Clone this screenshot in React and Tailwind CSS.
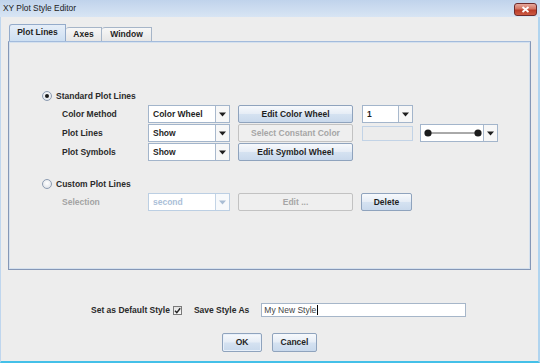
function Arrow({ disabled }) {
  return (
    <div className={`w-[14px] h-full flex items-center justify-center border-l ${disabled ? "border-l-[#c3d4e6] bg-[#f7f9fb]" : "border-l-[#a9b9cd] bg-[#f7f7f7]"}`}>
      <svg width="7" height="5" viewBox="0 0 7 5">
        <path d="M0 0.5H7L3.5 4.5Z" fill={disabled ? "#a9bdd4" : "#1e1e1e"} />
      </svg>
    </div>
  );
}

function Combo({ className, text, disabled, children }) {
  return (
    <div className={`h-full flex border bg-white ${disabled ? "border-[#bccfe3]" : "border-[#a3b5cb]"} ${className}`}>
      <div className={`flex-1 flex items-center pl-[4px] leading-none ${disabled ? "text-[#abc0d8]" : "text-[#1f1f1f]"}`}>
        {text}
        {children}
      </div>
      <Arrow disabled={disabled} />
    </div>
  );
}

function Btn({ className, children, disabled }) {
  return (
    <div
      className={`h-full flex items-center justify-center leading-none border rounded-[2px] ${
        disabled
          ? "border-[#c2c2c2] bg-[#efefef] text-[#a6a6a6]"
          : "border-[#8fa3bd] bg-[linear-gradient(to_bottom,#f7f9fc,#e6edf6_48%,#d5e2f1_52%,#c9d9ec)] text-[#1f1f1f]"
      } ${className}`}
    >
      {children}
    </div>
  );
}

function Radio({ checked }) {
  return (
    <div className="w-[10px] h-[10px] rounded-full border border-[#8c9cb2] bg-[radial-gradient(circle_at_50%_40%,#ffffff,#d9dde3)] flex items-center justify-center">
      {checked && <div className="w-[4px] h-[4px] rounded-full bg-[#1a1a1a]" />}
    </div>
  );
}

export default function App() {
  return (
    <div className="w-[540px] h-[363px] bg-[#ededed] flex flex-col overflow-hidden font-['Liberation_Sans',Arial,sans-serif] text-[8.5px] font-bold text-[#2a2a2a]">
      {/* title bar */}
      <div className="h-[17px] shrink-0 flex items-center justify-between bg-[linear-gradient(to_bottom,#c0d3eb,#d8e5f4)] pl-[3px] pr-[3px]">
        <span className="font-normal text-[8.4px] text-[#1b1b1b] leading-none">XY Plot Style Editor</span>
        <div className="w-[23px] h-[13px] mt-[1px] rounded-[3px] border border-[#6e2b2b] bg-[linear-gradient(to_bottom,#e6a89d,#d27360_45%,#ba3c28_55%,#cc5a43)] flex items-center justify-center">
          <svg width="9" height="7" viewBox="0 0 9 7">
            <path d="M1.5 1L7.5 6M7.5 1L1.5 6" stroke="white" strokeWidth="1.8" />
          </svg>
        </div>
      </div>

      {/* body */}
      <div className="flex-1 flex flex-col border-l border-l-[#bfd6ee] border-r-2 border-r-[#b0d4ef] border-b-2 border-b-[#44c0e8]">
        {/* tabs */}
        <div className="mt-[7px] h-[17px] flex items-end pl-[8px]">
          <div className="w-[57px] h-[17px] pt-[2px] flex justify-center border border-b-0 border-[#94abca] rounded-tl-[3px] bg-[linear-gradient(to_bottom,#e6eef8,#cddff2)] text-[#1f1f1f]">
            <span className="leading-[10px]">Plot Lines</span>
          </div>
          <div className="w-[36px] h-[14px] flex justify-center border border-b-0 border-l-0 border-[#a6b5c8] rounded-tl-[3px] bg-[linear-gradient(to_bottom,#f7f7f7,#e6e6e6)] text-[#1f1f1f]">
            <span className="leading-[10px] pt-[1px]">Axes</span>
          </div>
          <div className="w-[50px] h-[14px] flex justify-center border border-b-0 border-l-0 border-[#a6b5c8] rounded-tl-[3px] bg-[linear-gradient(to_bottom,#f7f7f7,#e6e6e6)] text-[#1f1f1f]">
            <span className="leading-[10px] pt-[1px]">Window</span>
          </div>
        </div>

        {/* panel */}
        <div className="ml-[7px] w-[523px] h-[229px] border border-[#8597b6] border-t-[#a3bbdc] shadow-[inset_0_0_0_1px_#d5e1ee] pt-[48px] pl-[33px] flex flex-col">
          {/* standard */}
          <div className="h-[12px] flex items-center gap-[4px]">
            <Radio checked />
            <span className="leading-none">Standard Plot Lines</span>
          </div>
          <div className="mt-[3px] flex flex-col gap-[1px] pl-[20px]">
            <div className="h-[18px] flex items-center">
              <span className="w-[86px] leading-none">Color Method</span>
              <Combo className="w-[82px]" text="Color Wheel" />
              <Btn className="ml-[8px] w-[115px]">Edit Color Wheel</Btn>
              <Combo className="ml-[9px] w-[51px]" text="1" />
            </div>
            <div className="h-[18px] flex items-center">
              <span className="w-[86px] leading-none">Plot Lines</span>
              <Combo className="w-[82px]" text="Show" />
              <Btn disabled className="ml-[8px] w-[115px]">Select Constant Color</Btn>
              <div className="ml-[9px] w-[51px] h-[15px] border border-[#c2d3e6] bg-[#ececec]" />
              <div className="ml-[7px] w-[78px] h-full flex border border-[#a3b5cb] bg-white">
                <div className="flex-1 flex items-center pl-[3px]">
                  <svg width="58" height="8" viewBox="0 0 58 8">
                    <line x1="4" y1="4" x2="54" y2="4" stroke="#555" strokeWidth="1" />
                    <circle cx="4" cy="4" r="3.6" fill="#1c1c1c" />
                    <circle cx="54" cy="4" r="3.6" fill="#1c1c1c" />
                  </svg>
                </div>
                <Arrow />
              </div>
            </div>
            <div className="h-[18px] flex items-center">
              <span className="w-[86px] leading-none">Plot Symbols</span>
              <Combo className="w-[82px]" text="Show" />
              <Btn className="ml-[8px] w-[115px]">Edit Symbol Wheel</Btn>
            </div>
          </div>

          {/* custom */}
          <div className="mt-[17px] h-[12px] flex items-center gap-[4px]">
            <Radio />
            <span className="leading-none">Custom Plot Lines</span>
          </div>
          <div className="mt-[3px] pl-[20px]">
            <div className="h-[18px] flex items-center">
              <span className="w-[86px] leading-none text-[#a3a3a3]">Selection</span>
              <Combo disabled className="w-[82px]" text="second" />
              <Btn disabled className="ml-[8px] w-[115px]">Edit ...</Btn>
              <Btn className="ml-[8px] w-[51px]">Delete</Btn>
            </div>
          </div>
        </div>

        {/* bottom */}
        <div className="mt-[33px] h-[14px] flex items-center pl-[90px]">
          <span className="leading-none">Set as Default Style</span>
          <div className="ml-[3px] w-[9px] h-[9px] border border-[#7a7a7a] bg-[linear-gradient(to_bottom,#e2e2e2,#fafafa)] flex items-center justify-center">
            <svg width="7" height="7" viewBox="0 0 7 7">
              <path d="M1 3.8L2.8 5.6L6.2 1.2" stroke="#262626" strokeWidth="1.4" fill="none" />
            </svg>
          </div>
          <span className="ml-[12px] leading-none">Save Style As</span>
          <div className="ml-[12px] w-[205px] h-[14px] border border-[#a6b6c9] bg-white flex items-center pl-[2px]">
            <span className="font-normal text-[#444] leading-none">My New Style</span>
            <div className="ml-[1px] w-[1px] h-[10px] bg-black" />
          </div>
        </div>
        <div className="mt-[16px] h-[19px] flex justify-center gap-[10px]">
          <Btn className="w-[40px] border-[#5d7aa0] shadow-[inset_0_0_0_1px_#e8f0fa]">OK</Btn>
          <Btn className="w-[45px]">Cancel</Btn>
        </div>
      </div>
    </div>
  );
}
